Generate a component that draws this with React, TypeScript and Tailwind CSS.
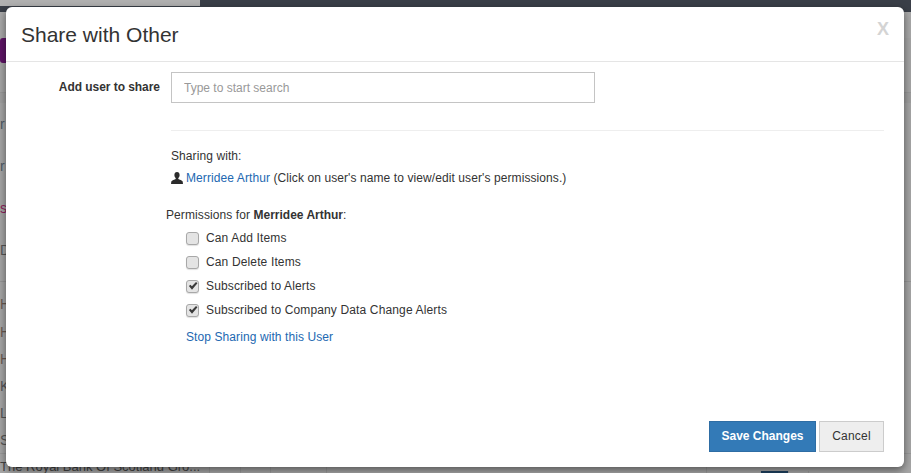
import React from 'react';

const sideRows = [
  { h: 'h-[42px]', text: 'r', color: 'text-[#4f5a66]' },
  { h: 'h-[42px]', text: 'r', color: 'text-[#4f5a66]' },
  { h: 'h-[42px]', text: 's', color: 'text-[#8c1f5c]' },
  { h: 'h-[42px]', text: 'D', color: 'text-[#555555]' },
];

const lowerRows = [
  { h: 'h-[28px]', text: 'H', color: 'text-[#6b5a50]' },
  { h: 'h-[27px]', text: 'H', color: 'text-[#6b5a50]' },
  { h: 'h-[27px]', text: 'H', color: 'text-[#6b5a50]' },
  { h: 'h-[27px]', text: 'K', color: 'text-[#555555]' },
  { h: 'h-[27px]', text: 'L', color: 'text-[#555555]' },
  { h: 'h-[27px]', text: 'S', color: 'text-[#555555]' },
];

const permissions = [
  { label: 'Can Add Items', checked: false },
  { label: 'Can Delete Items', checked: false },
  { label: 'Subscribed to Alerts', checked: true },
  { label: 'Subscribed to Company Data Change Alerts', checked: true },
];

const UserIcon = () => (
  <svg viewBox="0 0 12 12" className="w-3 h-3 shrink-0 text-[#2b2b2b]" fill="currentColor">
    <path d="M6 0C4.4 0 3.4 1.2 3.4 2.9c0 1.2.5 2.4 1.3 3.1v1.1C3.9 7.9 0.7 8.3 0.3 9.6L0 12h12l-.3-2.4C11.3 8.3 8.1 7.9 7.3 7.1V6c.8-.7 1.3-1.9 1.3-3.1C8.6 1.2 7.6 0 6 0z" />
  </svg>
);

const Checkbox = ({ checked }: { checked: boolean }) => (
  <span className="w-[13px] h-[13px] shrink-0 rounded-[3px] border border-[#a8a8a8] bg-[#e4e4e4] flex items-center justify-center shadow-[0_1px_1px_rgba(0,0,0,0.12)]">
    {checked && (
      <svg viewBox="0 0 11 11" className="w-[10px] h-[10px] text-[#3a3a3a]" fill="currentColor">
        <path d="M1 5.6l1.7-1.6 1.6 1.7L8.8 1 10.4 2.5 4.4 9.6z" />
      </svg>
    )}
  </span>
);

export default function App() {
  return (
    <div className="relative w-[911px] h-[473px] overflow-hidden bg-[#a6a6a6] font-['Liberation_Sans',Arial,sans-serif] text-xs text-[#333333]">
      {/* dimmed page behind the dialog */}
      <div className="flex h-[6px]">
        <div className="w-[200px] bg-[#b1b1b1]" />
        <div className="flex-1 bg-[#3a3f48]" />
      </div>
      <div className="h-[6px] bg-[#3a3f48]" />
      <div className="h-[26px] bg-[#a9a9a9]" />
      <div className="h-[25px] w-[7px] rounded-l-[3px] bg-[#5e1466]" />
      <div className="h-[30px] border-b border-[#999999]" />
      <div className="h-[10px] bg-[#a0a0a0]" />
      {sideRows.map((row, i) => (
        <div key={i} className={`${row.h} flex items-center text-sm ${row.color}`}>
          <span>{row.text}</span>
        </div>
      ))}
      <div className="h-[19px] pt-[10px]">
        <div className="border-t border-[#969696]" />
      </div>
      {lowerRows.map((row, i) => (
        <div key={i} className={`${row.h} flex items-center text-sm ${row.color}`}>
          <span>{row.text}</span>
        </div>
      ))}
      <div className="h-[20px] flex border-t border-[#999999]">
        <div className="w-[210px] border-r border-[#999999] pt-[6px] text-[13px] leading-[14px] text-[#444444] whitespace-nowrap">
          The Royal Bank Of Scotland Gro...
        </div>
        <div className="w-[31px] border-r border-[#999999]" />
        <div className="w-[30px] border-r border-[#999999]" />
        <div className="w-[56px] border-r border-[#999999]" />
        <div className="w-[380px] border-r border-[#999999]" />
        <div className="w-[54px]" />
        <div className="w-[27px] mt-[17px] bg-[#1d3f5e]" />
        <div className="w-[21px] mt-[17px] border-x border-[#999999]" />
      </div>

      {/* dialog */}
      <div className="absolute left-[6px] top-[7px] w-[898px] h-[460px] flex flex-col bg-white rounded-md shadow-[0_3px_9px_rgba(0,0,0,0.5)]">
        <div className="h-[55px] shrink-0 flex items-center justify-between border-b border-[#e5e5e5] pl-[15px] pr-[15px]">
          <h4 className="text-[21px] leading-none text-[#333333]">Share with Other</h4>
          <button type="button" className="text-lg font-bold text-[#d4d4d4] leading-none mb-[11px]">X</button>
        </div>

        <div className="flex pt-[10px]">
          <label className="w-[154px] shrink-0 text-right font-bold pt-[7px] leading-[16px] tracking-[-0.05px]">Add user to share</label>
          <input
            type="text"
            placeholder="Type to start search"
            className="ml-[11px] w-[424px] h-[31px] border border-[#c4c4c4] px-3 text-xs placeholder:text-[#999999] outline-none"
          />
        </div>

        <div className="ml-[165px] mr-[20px] mt-[27px] border-t border-[#eeeeee]" />

        <div className="tracking-[0.09px]">
          <div className="ml-[165px] mt-[15px] leading-5">Sharing with:</div>
          <div className="ml-[165px] mt-[2px] leading-5 flex items-center gap-[3px]">
            <UserIcon />
            <span>
              <a className="text-[#2268b1]">Merridee Arthur</a> (Click on user's name to view/edit user's permissions.)
            </span>
          </div>

          <div className="ml-[160px] mt-[17px] leading-5">
            Permissions for <b className="tracking-normal">Merridee Arthur</b>:
          </div>
          <div className="ml-[180px] mt-[1px] flex flex-col tracking-[0.14px]">
            {permissions.map((p) => (
              <div key={p.label} className="h-6 flex items-center gap-[7px]">
                <Checkbox checked={p.checked} />
                <span>{p.label}</span>
              </div>
            ))}
          </div>
          <a className="block ml-[180px] mt-[5px] leading-5 text-[#2268b1]">Stop Sharing with this User</a>
        </div>

        <div className="mt-auto flex justify-end gap-[3px] pr-[20px] pb-[15px]">
          <button type="button" className="w-[107px] h-[31px] pb-[2px] bg-[#337ab7] border border-[#2e6da4] text-white font-bold">Save Changes</button>
          <button type="button" className="w-[65px] h-[31px] pb-[2px] bg-[#eeeeee] border border-[#cccccc] text-[#333333] tracking-[0.2px]">Cancel</button>
        </div>
      </div>
    </div>
  );
}
